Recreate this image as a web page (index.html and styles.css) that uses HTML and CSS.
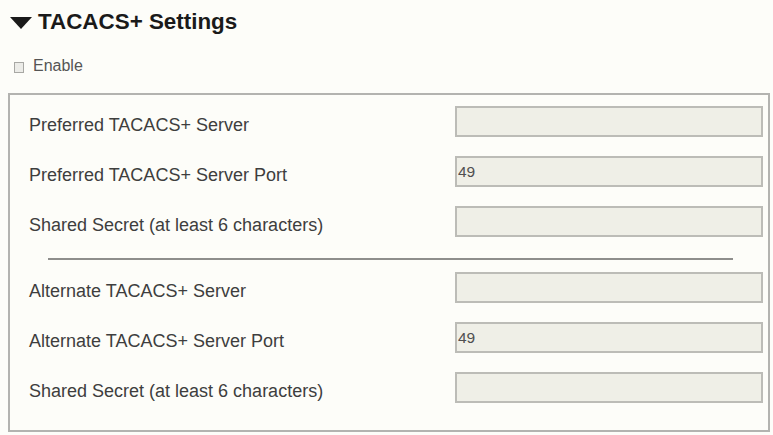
FILE: index.html
```html
<!DOCTYPE html>
<html>
<head>
<meta charset="utf-8">
<link rel="stylesheet" href="styles.css">
</head>
<body>
<div class="page">
  <h1 class="title">
    <svg class="caret" width="22" height="12" viewBox="0 0 22 12"><polygon points="0,0 22,0 11,12" fill="#1a1a1a"/></svg>
    <span>TACACS+ Settings</span>
  </h1>
  <label class="enable"><input type="checkbox" class="check"><span>Enable</span></label>
  <div class="box">
    <div class="group">
      <div class="row"><span class="label">Preferred TACACS+ Server</span><input class="field" type="text" value=""></div>
      <div class="row"><span class="label">Preferred TACACS+ Server Port</span><input class="field" type="text" value="49"></div>
      <div class="row"><span class="label">Shared Secret (at least 6 characters)</span><input class="field" type="text" value=""></div>
    </div>
    <hr class="sep">
    <div class="group">
      <div class="row"><span class="label">Alternate TACACS+ Server</span><input class="field" type="text" value=""></div>
      <div class="row"><span class="label">Alternate TACACS+ Server Port</span><input class="field" type="text" value="49"></div>
      <div class="row"><span class="label">Shared Secret (at least 6 characters)</span><input class="field" type="text" value=""></div>
    </div>
  </div>
</div>
</body>
</html>
```

FILE: styles.css
```css
html, body {
  margin: 0;
  padding: 0;
  background: #fdfdf9;
}
.page {
  padding: 9px 0 0 8px;
  font-family: "Liberation Sans", Arial, sans-serif;
}
.title {
  display: flex;
  align-items: center;
  gap: 6px;
  margin: 0 0 0 2px;
  font-size: 22.4px;
  line-height: 26px;
  font-weight: bold;
  color: #1a1a1a;
}
.caret {
  display: block;
  margin-top: 2px;
}
.enable {
  display: flex;
  align-items: center;
  gap: 9px;
  margin: 21px 0 0 6px;
  font-size: 16px;
  line-height: 20px;
  color: #555;
}
.check {
  appearance: none;
  -webkit-appearance: none;
  margin: 3px 0 0 0;
  width: 10px;
  height: 11px;
  border: 1px solid #a8a8a4;
  background: #ecece8;
  box-sizing: border-box;
}
.box {
  margin-top: 17px;
  width: 762px;
  box-sizing: border-box;
  border: 2px solid #b3b3b0;
  padding: 11px 5px 27px 19px;
}
.group {
  display: flex;
  flex-direction: column;
  gap: 19px;
}
.row {
  display: flex;
  align-items: center;
  justify-content: space-between;
}
.label {
  padding-top: 6px;
  font-size: 18px;
  line-height: 20px;
  color: #3e3e3e;
}
.field {
  width: 308px;
  height: 31px;
  box-sizing: border-box;
  margin: 0;
  border: 2px solid #bcbcb7;
  background: #efefe7;
  padding: 0 0 0 1px;
  font-family: "Liberation Sans", Arial, sans-serif;
  font-size: 15.5px;
  color: #505050;
  outline: none;
}
.sep {
  margin: 21px 30px 12px 19px;
  border: 0;
  height: 2px;
  background: #8e8e8c;
}
```
